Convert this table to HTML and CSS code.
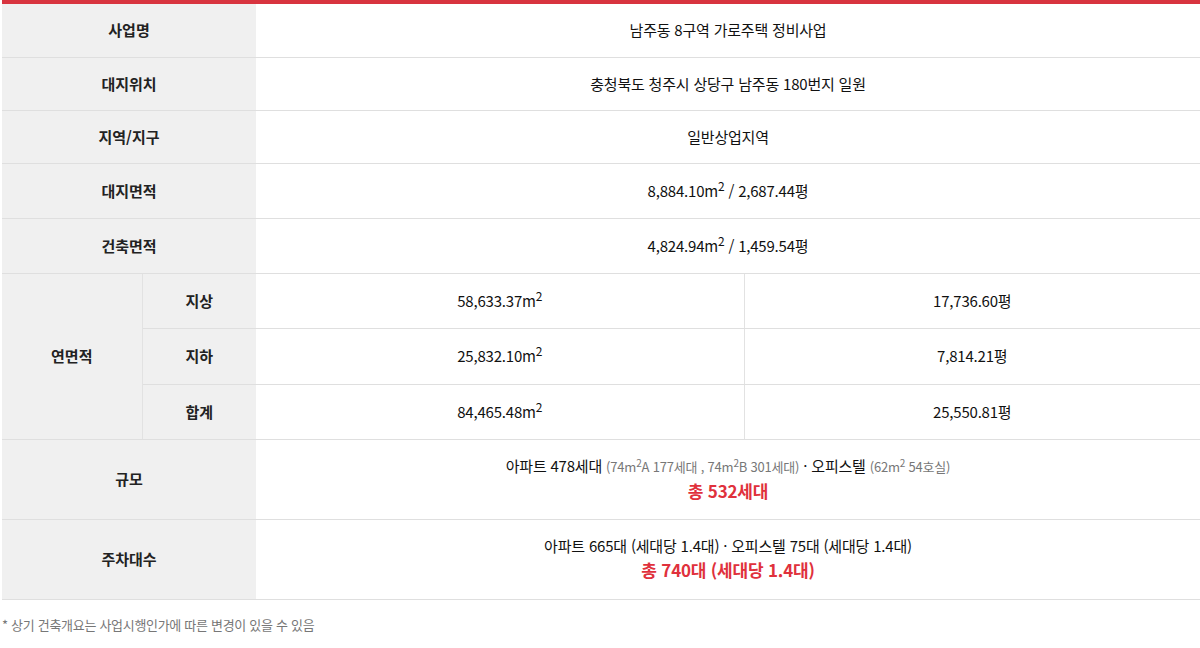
FILE: index.html
```html
<!DOCTYPE html>
<html lang="ko">
<head>
<meta charset="utf-8">
<link rel="stylesheet" href="styles.css">
</head>
<body>
<div class="wrap">
  <table class="spec">
    <colgroup>
      <col class="c1"><col class="c2"><col class="c3"><col class="c4">
    </colgroup>
    <tbody>
      <tr class="r55"><th colspan="2">사업명</th><td colspan="2">남주동 8구역 가로주택 정비사업</td></tr>
      <tr class="r53"><th colspan="2">대지위치</th><td colspan="2">충청북도 청주시 상당구 남주동 180번지 일원</td></tr>
      <tr class="r53"><th colspan="2">지역/지구</th><td colspan="2">일반상업지역</td></tr>
      <tr class="r55"><th colspan="2">대지면적</th><td colspan="2">8,884.10m<sup>2</sup> / 2,687.44평</td></tr>
      <tr class="r55"><th colspan="2">건축면적</th><td colspan="2">4,824.94m<sup>2</sup> / 1,459.54평</td></tr>
      <tr class="r55"><th rowspan="3" class="vsep">연면적</th><th>지상</th><td class="vsep">58,633.37m<sup>2</sup></td><td>17,736.60평</td></tr>
      <tr class="r56"><th>지하</th><td class="vsep">25,832.10m<sup>2</sup></td><td>7,814.21평</td></tr>
      <tr class="r55"><th>합계</th><td class="vsep">84,465.48m<sup>2</sup></td><td>25,550.81평</td></tr>
      <tr class="r80"><th colspan="2">규모</th><td colspan="2">
        <div class="line">아파트 478세대 <span class="sub">(74m<sup>2</sup>A 177세대 , 74m<sup>2</sup>B 301세대)</span> · 오피스텔 <span class="sub">(62m<sup>2</sup> 54호실)</span></div>
        <div class="total">총 532세대</div>
      </td></tr>
      <tr class="r80"><th colspan="2">주차대수</th><td colspan="2">
        <div class="line">아파트 665대 (세대당 1.4대) · 오피스텔 75대 (세대당 1.4대)</div>
        <div class="total">총 740대 (세대당 1.4대)</div>
      </td></tr>
    </tbody>
  </table>
  <p class="note">* 상기 건축개요는 사업시행인가에 따른 변경이 있을 수 있음</p>
</div>
</body>
</html>
```
FILE: styles.css
```css
html, body {
  margin: 0;
  padding: 0;
  background: #fff;
}
body {
  font-family: "Noto Sans CJK KR", "Noto Sans", sans-serif;
  color: #222;
}
.wrap {
  padding-left: 2px;
}
.spec {
  width: 1198px;
  border-collapse: collapse;
  table-layout: fixed;
  border-top: 4px solid #d8343f;
}
.c1 { width: 140px; }
.c2 { width: 114px; }
.c3 { width: 488px; }
.c4 { width: 456px; }
.spec th, .spec td {
  border-bottom: 1px solid #dfdfdf;
  text-align: center;
  vertical-align: middle;
  padding: 0;
  font-size: 15px;
  line-height: 20px;
}
.spec th {
  background: #f0f0f0;
  font-weight: 700;
  color: #222;
}
.spec td {
  background: #fff;
  font-weight: 400;
  color: #111;
  letter-spacing: -0.2px;
}
.spec .vsep {
  border-right: 1px solid #e2e2e2;
}
.r53 { height: 53px; }
.r55 { height: 55px; }
.r56 { height: 56px; }
.r80 { height: 80px; }
sup {
  font-size: 12px;
  line-height: 0;
  vertical-align: 6px;
}
.sub {
  font-size: 13px;
  color: #777;
}
.sub sup {
  font-size: 10px;
  vertical-align: 5px;
}
.line {
  line-height: 22px;
}
.total {
  color: #e0313c;
  font-weight: 700;
  font-size: 17px;
  line-height: 26px;
}
.note {
  margin: 15px 0 0;
  font-size: 13px;
  color: #777;
  letter-spacing: -0.3px;
}
```
